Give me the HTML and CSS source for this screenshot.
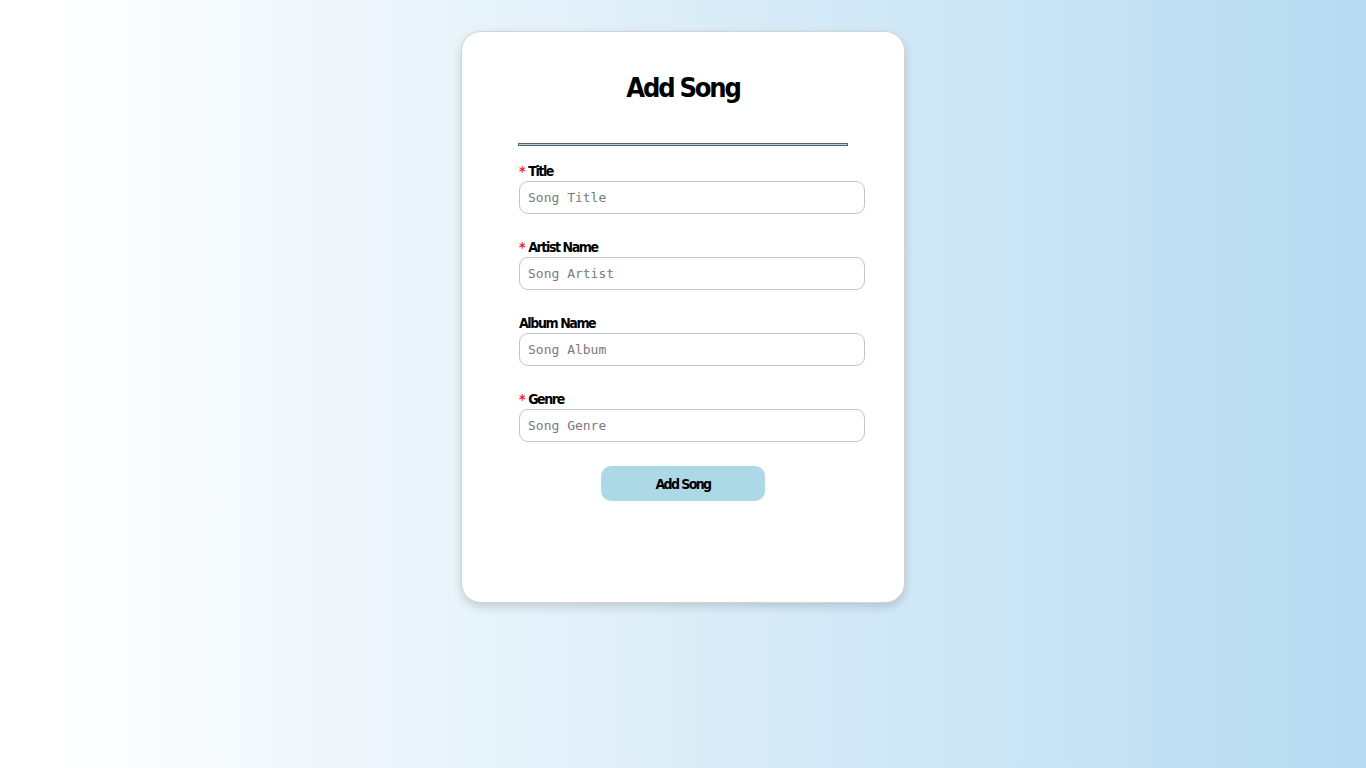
FILE: index.html
```html
<!DOCTYPE html>
<html lang="en">
<head>
<meta charset="utf-8">
<title>Add Song</title>
<link rel="stylesheet" href="styles.css">
</head>
<body>
  <main class="page">
    <section class="card">
      <h1 class="card-title">Add Song</h1>
      <form class="song-form">
        <hr class="divider">
        <div class="field">
          <label class="field-label" for="title"><span class="req">*</span>Title</label>
          <input class="field-input" id="title" type="text" placeholder="Song Title">
        </div>
        <div class="field">
          <label class="field-label" for="artist"><span class="req">*</span>Artist Name</label>
          <input class="field-input" id="artist" type="text" placeholder="Song Artist">
        </div>
        <div class="field">
          <label class="field-label" for="album">Album Name</label>
          <input class="field-input" id="album" type="text" placeholder="Song Album">
        </div>
        <div class="field">
          <label class="field-label" for="genre"><span class="req">*</span>Genre</label>
          <input class="field-input" id="genre" type="text" placeholder="Song Genre">
        </div>
        <button class="submit-btn" type="button">Add Song</button>
      </form>
    </section>
  </main>
</body>
</html>
```
FILE: styles.css
```css
html, body {
  margin: 0;
  padding: 0;
  height: 100%;
}

body {
  background: linear-gradient(to right, #ffffff 3%, #dcedf8 50%, #b6dbf1 100%);
  font-family: "DejaVu Sans Condensed", "DejaVu Sans", sans-serif;
  font-stretch: condensed;
  color: #000;
}

.page {
  display: flex;
  justify-content: center;
  padding-top: 31px;
}

.card {
  box-sizing: border-box;
  width: 444px;
  height: 572px;
  background: #fff;
  border: 1px solid #d4d4d4;
  border-radius: 20px;
  box-shadow: 0 4px 10px rgba(0, 0, 0, 0.15);
  padding-top: 38px;
  display: flex;
  flex-direction: column;
  align-items: center;
}

.card-title {
  margin: 0;
  font-size: 27px;
  line-height: 36px;
  font-weight: 700;
  letter-spacing: -2.2px;
  text-align: center;
}

.song-form {
  width: 330px;
  margin-top: 37px;
  display: flex;
  flex-direction: column;
}

.divider {
  box-sizing: border-box;
  width: 330px;
  height: 3px;
  margin: 0 0 17px 0;
  border: 1px solid #55606a;
  background: #a9d6e6;
}

.field {
  display: flex;
  flex-direction: column;
  gap: 2px;
  margin-bottom: 25px;
}

.field-label {
  font-size: 14px;
  line-height: 16px;
  font-weight: 700;
  letter-spacing: -1.4px;
  padding-left: 1px;
}

.req {
  color: #ff1a1a;
  margin-right: 4px;
}

.field-input {
  box-sizing: border-box;
  width: calc(100% + 16px);
  height: 33px;
  margin-left: 1px;
  padding: 0 8px;
  border: 1px solid #c4c4c4;
  border-radius: 9px;
  font-family: "DejaVu Sans Mono", "Liberation Mono", monospace;
  font-stretch: normal;
  font-size: 13px;
  color: #222;
  background: #fff;
  outline: none;
}

.field-input::placeholder {
  color: #7a7a7a;
}

.submit-btn {
  align-self: center;
  margin-top: -1px;
  width: 164px;
  height: 35px;
  border: none;
  border-radius: 10px;
  background: #add8e6;
  font-family: "DejaVu Sans Condensed", "DejaVu Sans", sans-serif;
  font-stretch: condensed;
  font-size: 14px;
  font-weight: 700;
  letter-spacing: -1.6px;
  color: #000;
}
```
